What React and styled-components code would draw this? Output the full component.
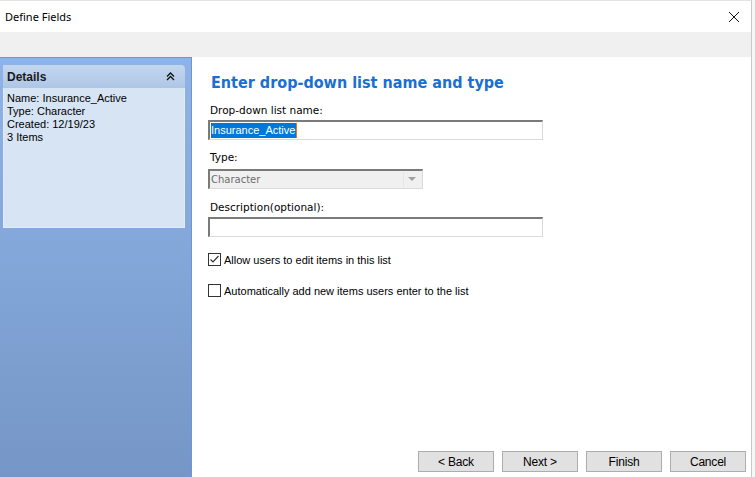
import React from "react";
import styled, { createGlobalStyle } from "styled-components";

const Global = createGlobalStyle`
  html, body { margin: 0; padding: 0; background: #ffffff; }
  body { width: 755px; height: 477px; overflow: hidden; }
  * { box-sizing: border-box; }
`;

const Screen = styled.div`
  width: 755px;
  height: 477px;
  display: flex;
  background: #f7f7f7;
`;

const Window = styled.div`
  width: 752px;
  height: 477px;
  display: flex;
  flex-direction: column;
  background: #ffffff;
  border-right: 1px solid #c9c9c9;
  border-top: 1px solid #e3e3e3;
`;

const TitleBar = styled.div`
  height: 31px;
  display: flex;
  align-items: center;
  justify-content: space-between;
  padding: 0 10px 0 5px;
  background: #ffffff;
`;

const Title = styled.span`
  font-family: "Noto Sans", "Open Sans", sans-serif;
  font-size: 11px;
  color: #000;
`;

const CloseBtn = styled.div`
  width: 14px;
  height: 14px;
  display: flex;
  align-items: center;
  justify-content: center;
`;

const Band = styled.div`
  height: 25px;
  background: #f0f0f0;
`;

const Main = styled.div`
  flex: 1;
  display: flex;
  min-height: 0;
`;

const Sidebar = styled.div`
  width: 192px;
  border-top: 1px solid #6b97d6;
  border-right: 1px solid #6e96d0;
  background: linear-gradient(180deg, #8fb3e6 0%, #82a6d8 50%, #7596c6 100%);
  padding: 7px 6px 0 3px;
`;

const DetailsBox = styled.div`
  width: 182px;
  height: 163px;
  display: flex;
  flex-direction: column;
  border-top-right-radius: 4px;
  overflow: hidden;
`;

const DetailsHeader = styled.div`
  height: 23px;
  display: flex;
  align-items: center;
  justify-content: space-between;
  padding: 0 10px 0 4px;
  background: linear-gradient(180deg, #c3d6ef 0%, #aec6e6 100%);
  font-family: "Liberation Sans", Arial, sans-serif;
  font-weight: bold;
  font-size: 12px;
  color: #1b1b1b;
`;

const DetailsBody = styled.div`
  flex: 1;
  background: #d6e4f4;
  border: 1px solid #e2ecf8;
  border-top: none;
  padding: 4px 3px;
  font-family: "Liberation Sans", Arial, sans-serif;
  font-size: 11px;
  line-height: 13px;
  color: #000;
`;

const Content = styled.div`
  flex: 1;
  display: flex;
  flex-direction: column;
  padding: 0 5px 5px 16px;
`;

const Heading = styled.h1`
  margin: 16px 0 0 3px;
  font-family: "DejaVu Sans Condensed", "DejaVu Sans", Verdana, sans-serif;
  font-stretch: condensed;
  font-weight: bold;
  font-size: 16px;
  line-height: 20px;
  color: #1b6fd1;
`;

const Label = styled.div`
  margin: ${(p) => p.$top}px 0 ${(p) => p.$bottom}px 2px;
  font-family: "DejaVu Sans", Verdana, sans-serif;
  font-size: 10.5px;
  line-height: 14px;
  color: #000;
`;

const TextBox = styled.div`
  width: ${(p) => p.$w}px;
  height: 20px;
  display: flex;
  align-items: center;
  padding: 0 1px;
  border: 1px solid #dadada;
  border-top: 2px solid #7a7a7a;
  border-left: 2px solid #7a7a7a;
  background: ${(p) => (p.$disabled ? "#f0f0f0" : "#ffffff")};
  font-family: "Liberation Sans", Arial, sans-serif;
  font-size: 11px;
  color: ${(p) => (p.$disabled ? "#6d6d6d" : "#000")};
`;

const Selected = styled.span`
  background: #0078d7;
  color: #ffffff;
  line-height: 15px;
  padding-right: 1px;
  border-right: 1px solid #e07a1f;
`;

const SelectValue = styled.span`
  flex: 1;
  font-family: "DejaVu Sans", Verdana, sans-serif;
  font-size: 10px;
`;

const DropBtn = styled.div`
  width: 17px;
  height: 16px;
  margin-right: 1px;
  display: flex;
  align-items: center;
  justify-content: center;
  background: #f0f0f0;
  border-left: 1px solid #e6e6e6;
`;

const CheckRow = styled.label`
  display: flex;
  align-items: center;
  gap: 3px;
  margin-top: ${(p) => p.$top}px;
  font-family: "Liberation Sans", Arial, sans-serif;
  font-size: 11px;
  color: #000;
`;

const Box = styled.span`
  width: 13px;
  height: 13px;
  border: 1px solid #333333;
  background: #ffffff;
  display: flex;
  align-items: center;
  justify-content: center;
`;

const Buttons = styled.div`
  margin-top: auto;
  display: flex;
  justify-content: flex-end;
  gap: 8px;
`;

const Button = styled.button`
  width: 76px;
  height: 21px;
  padding: 0;
  background: #e1e1e1;
  border: 1px solid #adadad;
  font-family: "Liberation Sans", Arial, sans-serif;
  font-size: 12px;
  color: #000;
  letter-spacing: -0.2px;
`;

const Check = ({ checked }) => (
  <Box>
    {checked && (
      <svg width="11" height="11" viewBox="0 0 11 11">
        <path d="M1.5 5.5 L4 8 L9.5 2" fill="none" stroke="#333" strokeWidth="1.2" />
      </svg>
    )}
  </Box>
);

export default function App() {
  return (
    <Screen>
      <Global />
      <Window>
        <TitleBar>
          <Title>Define Fields</Title>
          <CloseBtn>
            <svg width="12" height="12" viewBox="0 0 12 12">
              <path d="M1 1 L11 11 M11 1 L1 11" stroke="#111" strokeWidth="1" />
            </svg>
          </CloseBtn>
        </TitleBar>
        <Band />
        <Main>
          <Sidebar>
            <DetailsBox>
              <DetailsHeader>
                <span>Details</span>
                <svg width="9" height="9" viewBox="0 0 9 9">
                  <path d="M1 4.5 L4.5 1 L8 4.5 M1 8 L4.5 4.5 L8 8" fill="none" stroke="#111" strokeWidth="1.3" />
                </svg>
              </DetailsHeader>
              <DetailsBody>
                <div>Name: Insurance_Active</div>
                <div>Type: Character</div>
                <div>Created: 12/19/23</div>
                <div>3 Items</div>
              </DetailsBody>
            </DetailsBox>
          </Sidebar>
          <Content>
            <Heading>Enter drop-down list name and type</Heading>
            <Label $top={10} $bottom={3}>Drop-down list name:</Label>
            <TextBox $w={335}>
              <Selected>Insurance_Active</Selected>
            </TextBox>
            <Label $top={10} $bottom={5}>Type:</Label>
            <TextBox $w={215} $disabled>
              <SelectValue>Character</SelectValue>
              <DropBtn>
                <svg width="8" height="5" viewBox="0 0 8 5">
                  <path d="M0 0 L8 0 L4 4 Z" fill="#a0a0a0" />
                </svg>
              </DropBtn>
            </TextBox>
            <Label $top={11} $bottom={3}>Description(optional):</Label>
            <TextBox $w={335} />
            <CheckRow $top={16}>
              <Check checked />
              Allow users to edit items in this list
            </CheckRow>
            <CheckRow $top={18}>
              <Check />
              Automatically add new items users enter to the list
            </CheckRow>
            <Buttons>
              <Button>&lt; Back</Button>
              <Button>Next &gt;</Button>
              <Button>Finish</Button>
              <Button>Cancel</Button>
            </Buttons>
          </Content>
        </Main>
      </Window>
    </Screen>
  );
}
